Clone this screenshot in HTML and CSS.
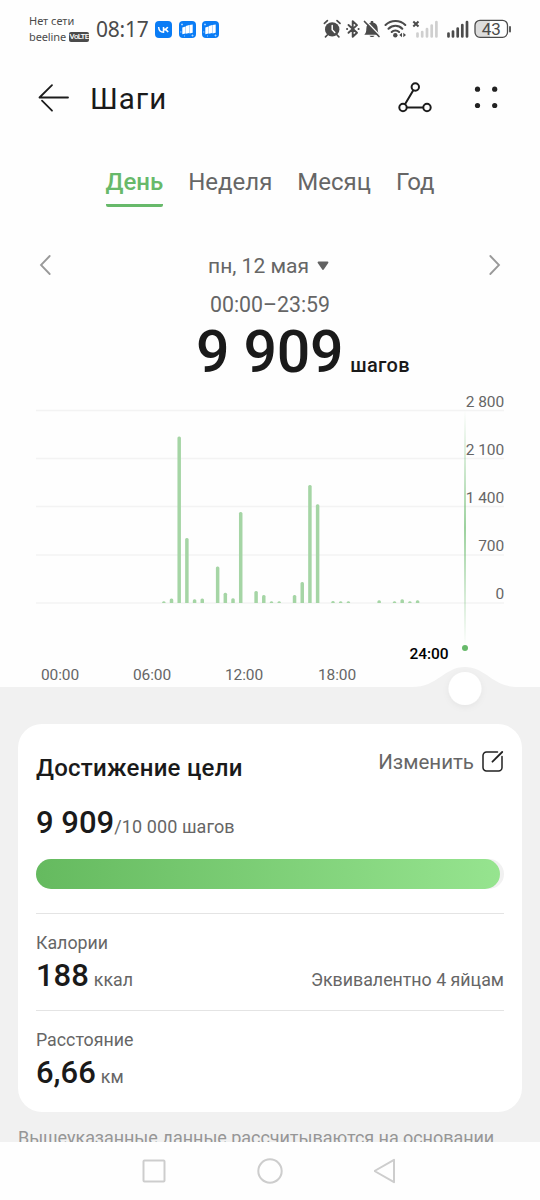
FILE: index.html
```html
<!DOCTYPE html>
<html lang="ru">
<head>
    <meta charset="UTF-8">
    <meta name="viewport" content="width=540, initial-scale=1.0">
    <title>Шаги</title>
    <link rel="stylesheet" href="styles.css">
</head>
<body>
    <div class="screen">
        <div class="status-bar">
            <div class="carrier">
                <span>Нет сети</span>
                <span class="carrier-row">beeline <b class="volte">VoLTE</b></span>
            </div>
            <div class="clock">08:17</div>
            <div class="apps">
                <svg width="17" height="17" viewBox="0 0 17 17">
                    <rect width="17" height="17" rx="4" fill="#0a7cf5"/>
                    <path d="M3.600 6c.3 3.200 2 5.200 4.900 5.200V6M12.700 6c-.6 1.500-1.900 2.600-4.200 2.600 2.500 0 3.800 1 4.600 2.600" fill="none" stroke="#fff" stroke-width="1.500"/>
                </svg>
                <svg width="17" height="17" viewBox="0 0 17 17">
                    <rect width="17" height="17" rx="4" fill="#0a7cf5"/>
                    <path d="M3.300 6.500l3.300-1v7l-3.300.8zM6.900 5l3.300-1v8l-3.300.8zM10.500 4l3.200-.6v8.400l-3.200.7z" fill="#fff"/>
                    <path d="M2 3.500h2M3 2.500v2M1 11h1.500M12.500 14.500h2M13.500 13.500v2M5 15h1" stroke="#b9dcff" stroke-width=".8"/>
                </svg>
                <svg width="17" height="17" viewBox="0 0 17 17">
                    <rect width="17" height="17" rx="4" fill="#0a7cf5"/>
                    <path d="M3.300 6.500l3.300-1v7l-3.300.8zM6.900 5l3.300-1v8l-3.300.8zM10.500 4l3.200-.6v8.400l-3.200.7z" fill="#fff"/>
                    <path d="M2 3.500h2M3 2.500v2M1 11h1.500M12.500 14.500h2M13.500 13.500v2M5 15h1" stroke="#b9dcff" stroke-width=".8"/>
                </svg>
            </div>
            <!-- будильник, bluetooth, без звука, wi-fi, сигнал, батарея -->
            <svg class="indicators" width="190" height="20" viewBox="0 0 190 20">
                <g fill="none" stroke="#4b4b4b" stroke-linecap="round">
                    <circle cx="9.200" cy="10.400" r="7.200" fill="#4b4b4b" stroke="none"/>
                    <path d="M1.400 4.400l3-2.800M17 4.400l-3-2.800M4.300 16l-1.800 1.800M14.100 16l1.800 1.800" stroke-width="1.700"/>
                    <path d="M9.200 6.500v4.200l2.600 2.800" stroke="#fff" stroke-width="1.500"/>
                    <path d="M25.500 6l8.500 7.800-4.300 4V2.200l4.300 3.900-8.500 7.700M24 10h.2M35.500 10h.2" stroke-width="1.900" stroke-linejoin="round"/>
                </g>
                <path d="M41.300 15.700c1.600-1.500 2-3 2-5.700 0-3.600 1.900-6 4.500-6.500V2h2.400v1.500c2.600.5 4.500 2.900 4.500 6.500 0 2.700.4 4.200 2 5.700zM46.500 16.800h5c-.6 1.600-4.400 1.600-5 0z" fill="#4b4b4b"/>
                <path d="M42.500 1.500l15 15.500" stroke="#fff" stroke-width="1.500"/>
                <path d="M41.500 2.500l14.500 15" stroke="#4b4b4b" stroke-width="1.700" stroke-linecap="round"/>
                <g fill="none" stroke="#4b4b4b" stroke-width="2.100" stroke-linecap="round">
                    <path d="M62.500 6c5.500-5.300 14.500-5.300 19.800 0M65.500 9.700c4-4 10-4 13.800 0M68.700 13c2-2 5.400-2 7.400 0"/>
                </g>
                <circle cx="72.300" cy="16.200" r="2.200" fill="#4b4b4b"/>
                <path d="M76.300 16l2.700-2.300v4.600zM83 16l-2.700-2.300v4.600z" fill="#4b4b4b"/>
                <path d="M90.300 2.500l5.200 5M95.500 2.500l-5.200 5" stroke="#4b4b4b" stroke-width="2"/>
                <path d="M94.500 14.500v3M99.200 13v4.500M104 10v7.500M108.700 6.500v11M113.400 3v14.500" stroke="#cfcfcf" stroke-width="2.700" stroke-linecap="round"/>
                <path d="M125.500 14.500v3M130 12.500v5M134.700 9.500v8M139.300 6v11.500M144 3v14.500" stroke="#4b4b4b" stroke-width="2.700" stroke-linecap="round"/>
                <path d="M156 1.500h11v17h-11a4 4 0 0 1-4-4v-9a4 4 0 0 1 4-4z" fill="#dcdcdc"/>
                <rect x="152" y="1.300" width="32.500" height="17" rx="5" fill="none" stroke="#4b4b4b" stroke-width="1.300"/>
                <path d="M187 8v4.500" stroke="#4b4b4b" stroke-width="1.800" stroke-linecap="round"/>
                <text class="battery-text" x="168.200" y="15.600" text-anchor="middle">43</text>
            </svg>
        </div>

        <div class="header">
            <svg width="32" height="30" viewBox="0 0 32 30" fill="none" stroke="#1c1c1c" stroke-width="1.800" stroke-linecap="round" stroke-linejoin="round">
                <path d="M14 2.200L1.500 14.500H30M4 17.700l10 10"/>
            </svg>
            <h1 class="title">Шаги</h1>
            <svg class="route" width="34" height="32" viewBox="0 0 34 32" fill="none" stroke="#1c1c1c" stroke-width="2">
                <circle cx="17.300" cy="5" r="3.700"/>
                <circle cx="5" cy="25.500" r="3.700"/>
                <circle cx="29" cy="25.500" r="3.700"/>
                <path d="M15.300 8.200L7 22.300M8.700 25.500h16.600"/>
            </svg>
            <svg class="more" width="24" height="24" viewBox="0 0 24 24" fill="#222">
                <circle cx="3.500" cy="3.200" r="2.600"/>
                <circle cx="20.700" cy="3.200" r="2.600"/>
                <circle cx="3.500" cy="19.500" r="2.600"/>
                <circle cx="20.700" cy="19.500" r="2.600"/>
            </svg>
        </div>

        <div class="tabs">
            <div class="tab active">День</div>
            <div class="tab">Неделя</div>
            <div class="tab">Месяц</div>
            <div class="tab">Год</div>
        </div>

        <div class="date-row">
            <svg width="12" height="22" viewBox="0 0 12 22" fill="none" stroke="#999" stroke-width="1.800" stroke-linecap="round"><path d="M10.700 2L2 11l8.700 9"/></svg>
            <div class="date">
                <span>пн, 12 мая</span>
                <svg width="12" height="10" viewBox="0 0 12 10"><path d="M1.500 1.500h9L6 8z" fill="#626262" stroke="#626262" stroke-width="1.800" stroke-linejoin="round"/></svg>
            </div>
            <svg width="12" height="22" viewBox="0 0 12 22" fill="none" stroke="#999" stroke-width="1.800" stroke-linecap="round"><path d="M1.300 2l8.700 9-8.700 9"/></svg>
        </div>
        <div class="period">00:00–23:59</div>
        <div class="total"><span class="total-value">9 909</span><span class="total-unit">шагов</span></div>

        <svg class="chart" width="540" height="334" viewBox="0 0 540 334">
            <defs>
                <linearGradient id="cursor" x1="0" y1="0" x2="0" y2="1">
                    <stop offset="0" stop-color="#67b96a" stop-opacity="0"/>
                    <stop offset=".5" stop-color="#67b96a" stop-opacity=".65"/>
                    <stop offset="1" stop-color="#67b96a" stop-opacity="0"/>
                </linearGradient>
                <filter id="knob" x="-50%" y="-50%" width="200%" height="200%">
                    <feDropShadow dx="0" dy="2" stdDeviation="3" flood-opacity=".05"/>
                </filter>
            </defs>
            <path class="grid" d="M36 20.500h468M36 68.500h468M36 116.500h468M36 165h468M36 213h468"/>
            <g id="bars"></g>
            <rect x="464" y="20" width="2" height="236" fill="url(#cursor)"/>
            <g class="axis-y">
                <text x="504" y="17">2 800</text>
                <text x="504" y="65">2 100</text>
                <text x="504" y="113">1 400</text>
                <text x="504" y="161">700</text>
                <text x="504" y="209">0</text>
            </g>
            <g class="axis-x">
                <text x="60" y="289.500">00:00</text>
                <text x="152" y="289.500">06:00</text>
                <text x="244" y="289.500">12:00</text>
                <text x="337" y="289.500">18:00</text>
                <text class="current" x="429" y="268.500">24:00</text>
            </g>
            <circle cx="465" cy="258" r="3" fill="#67b96a"/>
            <path d="M0 297h412c26 0 32-20 53-20s27 20 53 20h22v37H0z" fill="#f1f1f1"/>
            <circle cx="465" cy="298.500" r="16.500" fill="#fff" filter="url(#knob)"/>
        </svg>

        <div class="content">
            <div class="card">
                <div class="goal-head">
                    <h2 class="goal-title">Достижение цели</h2>
                    <div class="edit">
                        <span>Изменить</span>
                        <svg width="22" height="22" viewBox="0 0 22 22" fill="none" stroke="#222" stroke-width="1.500" stroke-linecap="round">
                            <path d="M15.500 1H4.500a3.500 3.500 0 0 0-3.500 3.500v12a3.500 3.500 0 0 0 3.500 3.500h12a3.500 3.500 0 0 0 3.500-3.500V5.500"/>
                            <path d="M10.500 10.700L20.200 1" stroke-width="1.800"/>
                        </svg>
                    </div>
                </div>
                <div class="goal-value"><b>9 909</b><span>/10 000 шагов</span></div>
                <div class="progress"><div class="progress-fill" id="progress"></div></div>
                <div class="metric">
                    <div class="metric-name">Калории</div>
                    <div class="metric-row">
                        <div><b>188</b><span class="unit">ккал</span></div>
                        <span class="note">Эквивалентно 4 яйцам</span>
                    </div>
                </div>
                <div class="metric">
                    <div class="metric-name">Расстояние</div>
                    <div class="metric-row">
                        <div><b>6,66</b><span class="unit">км</span></div>
                    </div>
                </div>
            </div>
            <p class="hint">Вышеуказанные данные рассчитываются на основании</p>
        </div>

        <div class="nav-bar">
            <svg width="24" height="24" viewBox="0 0 24 24"><rect x="1.500" y="1.500" width="21" height="21" rx="1"/></svg>
            <svg width="26" height="26" viewBox="0 0 26 26"><circle cx="13" cy="13" r="11.700"/></svg>
            <svg width="24" height="26" viewBox="0 0 24 26"><path d="M20 1.800v22.400L0.500 13z"/></svg>
        </div>
    </div>

    <script>
        // шаги по получасовым интервалам: [номер интервала, шаги]
        const steps = [
            [13, 25], [14, 65], [15, 2422], [16, 946], [17, 55], [18, 65],
            [20, 530], [21, 150], [22, 70], [23, 1324], [25, 175], [26, 115],
            [27, 25], [28, 25], [30, 115], [31, 305], [32, 1715], [33, 1435],
            [35, 30], [36, 25], [37, 25], [41, 40], [43, 25], [44, 55], [45, 25], [46, 40]
        ];
        const slot = 7.69;
        const baseline = 213;

        document.getElementById("bars").innerHTML = steps.map(([i, value]) => {
            const x = 60 + (i + 0.5) * slot - 1.75;
            const h = value / 2800 * 192.5;
            const y = baseline - h;
            const r = Math.min(1.5, h);
            return `<path d="M${x} ${baseline}V${y + r}q0-${r} ${r}-${r}h${3.5 - 2 * r}q${r} 0 ${r} ${r}V${baseline}z"/>`;
        }).join("");

        document.getElementById("progress").style.width = 9909 / 10000 * 100 + "%";
    </script>
</body>
</html>
```
FILE: styles.css
```css
* {
    box-sizing: border-box;
}

body {
    margin: 0;
    font-family: Roboto, "Noto Sans", sans-serif;
    background: #fff;
    color: #1a1a1a;
}

h1, h2, p {
    margin: 0;
}

svg {
    display: block;
    flex: none;
}

.screen {
    width: 540px;
    height: 1200px;
    display: flex;
    flex-direction: column;
    overflow: hidden;
    background: #fefefe;
}

/* status bar */
.status-bar {
    height: 58px;
    padding: 0 27px 0 29px;
    display: flex;
    align-items: center;
    color: #4b4b4b;
}

.carrier {
    width: 67px;
    display: flex;
    flex-direction: column;
    font-family: "Noto Sans", sans-serif;
    font-size: 11px;
    line-height: 16px;
    white-space: nowrap;
}

.carrier-row {
    display: flex;
    align-items: center;
    gap: 3px;
    letter-spacing: -0.1px;
}

.volte {
    width: 20px;
    border-radius: 2px;
    background: #4b4b4b;
    color: #fff;
    font-family: Roboto, sans-serif;
    font-size: 8px;
    line-height: 10px;
    letter-spacing: -0.6px;
    text-align: center;
}

.clock {
    width: 59px;
    font-family: "Noto Sans", sans-serif;
    font-size: 21px;
    letter-spacing: -0.2px;
}

.apps {
    display: flex;
    gap: 6.5px;
}

.indicators {
    margin-left: auto;
}

.battery-text {
    font-size: 17px;
    fill: #4b4b4b;
}

/* header */
.header {
    height: 80px;
    padding: 0 42.5px 0 38px;
    display: flex;
    align-items: center;
}

.title {
    flex: 1;
    padding: 2px 0 0 20px;
    font-size: 29.5px;
    font-weight: 400;
    letter-spacing: 1px;
}

.more {
    margin-left: 42px;
}

.tabs {
    height: 97px;
    padding-top: 27px;
    display: flex;
    justify-content: center;
    gap: 25px;
    font-size: 24px;
    color: #666;
}

.tab {
    height: 42px;
    line-height: 35px;
}

.tab.active {
    color: #67b96a;
    font-weight: 500;
    border-bottom: 3px solid #67b96a;
    border-radius: 2px;
}

/* date and total */
.date-row {
    height: 60px;
    padding: 0 39px;
    display: flex;
    align-items: center;
    justify-content: space-between;
}

.date {
    padding: 2px 3px 0 0;
    display: flex;
    align-items: center;
    gap: 8px;
    font-size: 21px;
    color: #666;
}

.period {
    height: 24px;
    line-height: 20px;
    text-align: center;
    font-size: 21.3px;
    color: #666;
}

.total {
    height: 71px;
    padding-left: 196px;
    display: flex;
    align-items: baseline;
    line-height: 65px;
}

.total-value {
    font-size: 59px;
    font-weight: 500;
    letter-spacing: -0.3px;
}

.total-unit {
    margin-left: 7px;
    font-size: 20px;
    font-weight: 500;
    letter-spacing: 0.3px;
}

/* chart */
.chart text {
    font-size: 15.5px;
    letter-spacing: -0.1px;
    fill: #666;
}

.grid {
    stroke: #f3f3f3;
    stroke-width: 1.5;
}

#bars {
    fill: #a5d5a5;
}

.axis-y text {
    text-anchor: end;
}

.axis-x text {
    text-anchor: middle;
}

.chart .current {
    fill: #000;
    font-weight: 500;
}

/* goal card */
.content {
    flex: 1;
    min-height: 0;
    padding: 0 18px;
    overflow: hidden;
    background: #f1f1f1;
}

.card {
    height: 388px;
    padding: 0 18px;
    border-radius: 24px;
    background: #fff;
}

.goal-head {
    height: 76px;
    display: flex;
    justify-content: space-between;
}

.goal-title {
    padding-top: 28px;
    font-size: 24px;
    line-height: 32px;
    font-weight: 500;
    letter-spacing: 0.25px;
}

.edit {
    padding-top: 22px;
    height: 54px;
    display: flex;
    align-items: center;
    gap: 8px;
    font-size: 20.5px;
    color: #666;
}

.goal-value {
    height: 59px;
    line-height: 46px;
    font-size: 18px;
    color: #666;
}

.goal-value span {
    letter-spacing: 0.1px;
}

b {
    font-weight: 500;
}

.goal-value b,
.metric b {
    font-size: 31px;
    color: #1a1a1a;
}

.progress {
    height: 30px;
    margin-bottom: 24px;
    border-radius: 15px;
    background: #f1f1f1;
}

.progress-fill {
    height: 100%;
    border-radius: 15px;
    background: linear-gradient(90deg, #65ba5f, #96e48f);
}

.metric {
    height: 97px;
    border-top: 1px solid #e4e4e4;
    padding-top: 17px;
    font-size: 17.8px;
    color: #666;
}

.metric-name {
    line-height: 24px;
}

.metric-row {
    display: flex;
    align-items: baseline;
    justify-content: space-between;
    line-height: 42px;
}

.unit {
    margin-left: 5px;
}

.hint {
    padding-top: 14px;
    font-size: 18px;
    line-height: 24px;
    letter-spacing: -0.05px;
    color: #969696;
    white-space: nowrap;
}

/* system navigation */
.nav-bar {
    height: 58px;
    display: flex;
    align-items: center;
    justify-content: center;
    gap: 91px;
    fill: none;
    stroke: #cdcdcd;
    stroke-width: 2;
    stroke-linejoin: round;
}
```
